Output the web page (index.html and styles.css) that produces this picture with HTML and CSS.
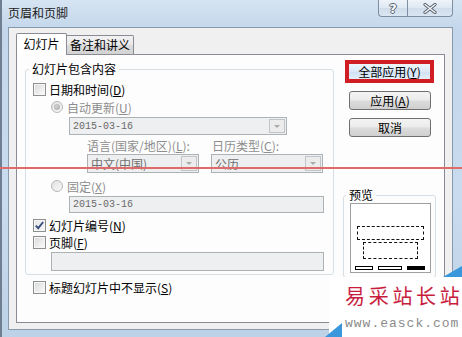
FILE: index.html
```html
<!DOCTYPE html>
<html lang="zh-CN">
  <head>
    <meta charset="UTF-8" />
    <title>页眉和页脚</title>
    <link rel="stylesheet" href="styles.css">
  </head>
  <body>
    <div class="window">
      <div class="titlebar">
        <span class="title">页眉和页脚</span>
        <div class="caption">
          <span class="cap help">?</span>
          <span class="cap close">
            <svg width="14" height="11" viewBox="0 0 14 11"><path d="M2 1.5 L12 9.5 M12 1.5 L2 9.5" stroke="#56606c" stroke-width="3.2" stroke-linecap="round"/><path d="M2 1.5 L12 9.5 M12 1.5 L2 9.5" stroke="#f6f8fa" stroke-width="1.4" stroke-linecap="round"/></svg>
          </span>
        </div>
      </div>

      <div class="client">
        <div class="tabs">
          <div class="tab active">幻灯片</div>
          <div class="tab">备注和讲义</div>
        </div>

        <div class="panel">
          <div class="main">
            <fieldset class="group content">
              <legend>幻灯片包含内容</legend>
              <label class="row mt6"><span class="cb"></span>日期和时间(<u>D</u>)</label>
              <label class="row mt4 in1 off"><span class="rb on"></span>自动更新(<u>U</u>)</label>
              <div class="row box-row mt3 in2">
                <div class="combo w218"><span class="val">2015-03-16</span><span class="drop"></span></div>
              </div>
              <div class="row mt3 in3 off labels">
                <span class="lbl-lang">语言(国家/地区)(<u>L</u>):</span>
                <span>日历类型(<u>C</u>):</span>
              </div>
              <div class="row box-row mt2 in3 pair">
                <div class="combo w112 tall"><span class="val cjk">中文(中国)</span><span class="drop"></span></div>
                <div class="combo w112 tall"><span class="val cjk">公历</span><span class="drop"></span></div>
              </div>
              <label class="row mt6 in1 off"><span class="rb"></span>固定(<u>X</u>)</label>
              <div class="row box-row mt3 in2">
                <div class="field w255"><span class="val">2015-03-16</span></div>
              </div>
              <label class="row mt5"><span class="cb checked"><svg width="11" height="11" viewBox="0 0 11 11"><path d="M1.8 5.6 L4.2 8.2 L9.2 2" fill="none" stroke="#3b4f7e" stroke-width="1.9"/></svg></span>幻灯片编号(<u>N</u>)</label>
              <label class="row mt3"><span class="cb"></span>页脚(<u>F</u>)</label>
              <div class="row box-row mt3 in1">
                <div class="field w273 tall"></div>
              </div>
            </fieldset>
            <label class="row mt5 solo"><span class="cb"></span>标题幻灯片中不显示(<u>S</u>)</label>
          </div>

          <div class="side">
            <div class="hl"><button class="btn def">全部应用(<u>Y</u>)</button></div>
            <button class="btn">应用(<u>A</u>)</button>
            <button class="btn">取消</button>

            <fieldset class="group preview">
              <legend>预览</legend>
              <div class="slide">
                <div class="dash d1"></div>
                <div class="dash d2"></div>
                <div class="bars">
                  <span class="bar b1"></span>
                  <span class="bar b2"></span>
                  <span class="bar b3"></span>
                </div>
              </div>
            </fieldset>
          </div>
        </div>
      </div>

      <div class="redline"></div>

      <div class="watermark">
        <svg class="wm-corners" width="137" height="71" viewBox="0 0 137 71">
          <polygon points="118,11 137,11 137,0" fill="#3a97db"/>
          <polygon points="0,71 17,57 17,71" fill="#3a97db"/>
        </svg>
        <div class="wm-name">易采站长站</div>
        <div class="wm-url">www.easck.com</div>
      </div>
    </div>
  </body>
</html>
```

FILE: styles.css
```css
* {
  box-sizing: border-box;
}

body {
  margin: 0;
  width: 462px;
  height: 337px;
  overflow: hidden;
  font-family: "Noto Sans CJK SC", sans-serif;
  font-size: 12px;
  color: #000;
  background: #c4d7eb;
}

u {
  text-decoration: underline;
}

/* window frame */
.window {
  position: relative;
  width: 462px;
  height: 337px;
  display: flex;
  flex-direction: column;
  border-left: 2px solid #6f7f91;
  background: linear-gradient(180deg, #d6e4f2 0, #c3d6eb 30px, #c9dbee 200px, #bdd1e7 100%);
}

.titlebar {
  height: 27px;
  display: flex;
  align-items: flex-start;
  padding-left: 6px;
  flex-shrink: 0;
}

.title {
  line-height: 26px;
  color: #1b1b1b;
}

.caption {
  margin-left: auto;
  margin-right: 9px;
  display: flex;
}

.cap {
  height: 17px;
  display: flex;
  align-items: center;
  justify-content: center;
  border: 1px solid #7e8fa3;
  border-top: none;
  background: linear-gradient(180deg, #eef3f9 0, #dee8f3 50%, #cfdcea 51%, #dae6f2 100%);
}

.cap.help {
  width: 29px;
  border-right: none;
  border-radius: 0 0 0 4px;
  font-family: "DejaVu Sans", sans-serif;
  font-weight: bold;
  font-size: 13px;
  color: #f4f6f8;
  text-shadow: 1px 0 #5a6470, -1px 0 #5a6470, 0 1px #5a6470, 0 -1px #5a6470;
}

.cap.close {
  width: 46px;
  border-radius: 0 0 4px 0;
}

/* client area */
.client {
  flex: 1;
  margin: 0 9px 7px 6px;
  padding: 5px 7px 6px 7px;
  display: flex;
  flex-direction: column;
  background: #f0f0f0;
  border: 1px solid #8b9aab;
}

.tabs {
  display: flex;
  align-items: flex-end;
  height: 22px;
  margin-bottom: -1px;
  position: relative;
  z-index: 1;
}

.tab {
  width: 67px;
  height: 19px;
  margin-bottom: 1px;
  line-height: 18px;
  text-align: center;
  border: 1px solid #898c95;
  border-bottom: none;
  border-left: none;
  border-radius: 0 2px 0 0;
  background: linear-gradient(180deg, #f2f2f2 0, #e9e9e9 50%, #dcdcdc 51%, #d2d2d2 100%);
}

.tab.active {
  width: 51px;
  height: 22px;
  margin-bottom: 0;
  line-height: 20px;
  border-left: 1px solid #898c95;
  border-radius: 2px 2px 0 0;
  background: #fff;
}

.panel {
  flex: 1;
  display: flex;
  border: 1px solid #898c95;
  background: #fdfdfd;
}

.main {
  width: 317px;
  padding-left: 8px;
}

.side {
  width: 94px;
  margin-left: 9px;
  padding-top: 5px;
}

/* group boxes */
.group {
  margin: 0;
  min-width: 0;
  border: 1px solid #d5dfe5;
  border-radius: 3px;
}

.group legend {
  padding: 0 3px;
  margin-left: -4px;
  line-height: 14px;
}

.content {
  width: 309px;
  margin-top: 7px;
  padding: 0 0 3px 7px;
}

.row {
  display: flex;
  align-items: center;
  height: 14px;
  white-space: nowrap;
}

.row.box-row {
  height: auto;
}

.row.solo {
  margin-left: 8px;
}

.mt2 { margin-top: 2px; }
.mt3 { margin-top: 3px; }
.mt4 { margin-top: 4px; }
.mt5 { margin-top: 5px; }
.mt6 { margin-top: 6px; }

.in1 { padding-left: 18px; }
.in2 { padding-left: 36px; }
.in3 { padding-left: 54px; }

.off {
  color: #8d8d8d;
}

.lbl-lang {
  width: 125px;
}

.pair {
  gap: 12px;
}

/* check boxes and radios */
.cb {
  width: 13px;
  height: 13px;
  margin-right: 3px;
  flex-shrink: 0;
  display: flex;
  align-items: center;
  justify-content: center;
  border: 1px solid #8e8f8f;
  background: linear-gradient(135deg, #d6d8db 0, #eeeeee 60%, #fbfbfb 100%);
  box-shadow: inset 0 0 0 1px #f6f6f6;
}

.cb.checked {
  background: linear-gradient(135deg, #e4e6ea 0, #f8f8f8 100%);
}

.rb {
  width: 12px;
  height: 12px;
  margin-right: 4px;
  flex-shrink: 0;
  display: flex;
  align-items: center;
  justify-content: center;
  border: 1px solid #b8b8b8;
  border-radius: 50%;
  background: linear-gradient(135deg, #e2e2e2, #f8f8f8);
}

.rb.on::after {
  content: "";
  width: 6px;
  height: 6px;
  border-radius: 50%;
  background: radial-gradient(circle at 40% 40%, #d4d4d4, #a2a2a2);
}

/* combos and fields */
.combo,
.field {
  height: 18px;
  display: flex;
  align-items: center;
  border: 1px solid #adb2b5;
  background: #eeeff1;
}

.tall {
  height: 19px;
}

.w112 { width: 112px; }
.w218 { width: 218px; }
.w255 { width: 255px; height: 17px; }
.w273 { width: 273px; }

.val {
  flex: 1;
  padding-left: 3px;
  font-family: "Liberation Mono", monospace;
  font-size: 10px;
  color: #6a6a6a;
}

.val.cjk {
  font-family: "Noto Sans CJK SC", sans-serif;
  font-size: 12px;
  color: #707070;
}

.drop {
  width: 16px;
  align-self: stretch;
  margin: 1px 1px 1px 0;
  display: flex;
  align-items: center;
  justify-content: center;
  border: 1px solid #c1c5c9;
  background: #ececec;
}

.drop::after {
  content: "";
  border-left: 3px solid transparent;
  border-right: 3px solid transparent;
  border-top: 3px solid #a9a9a9;
}

/* buttons */
.btn {
  display: block;
  width: 82px;
  height: 19px;
  margin: 8px 0 0 6px;
  padding: 0;
  font: inherit;
  color: #000;
  line-height: 16px;
  text-align: center;
  border: 1px solid #707070;
  border-radius: 3px;
  background: linear-gradient(180deg, #f4f4f4 0, #ebebeb 48%, #dcdcdc 52%, #cfcfcf 100%);
}

.hl {
  width: 89px;
  height: 23px;
  margin-left: 2px;
  border: 4px solid #d01e24;
}

.btn.def {
  width: 81px;
  height: 15px;
  margin: 0;
  border: none;
  border-radius: 0;
  line-height: 14px;
  background: linear-gradient(180deg, #eef5fc 0, #dce9f7 50%, #cfe1f4 51%, #e3eefa 100%);
}

/* preview */
.preview {
  width: 93px;
  height: 90px;
  margin-top: 51px;
  padding: 1px 0 0 6px;
}

.slide {
  width: 81px;
  height: 70px;
  padding: 22px 0 0 0;
  border: 1px solid #a0a0a0;
  background: #fff;
}

.dash {
  border: 1px dashed #111;
}

.d1 {
  width: 67px;
  height: 14px;
  margin-left: 6px;
}

.d2 {
  width: 55px;
  height: 17px;
  margin: 2px 0 0 12px;
}

.bars {
  display: flex;
  gap: 5px;
  margin: 7px 0 0 4px;
}

.bar {
  height: 4px;
  border: 1px solid #000;
  background: #fff;
}

.b1 { width: 18px; }
.b2 { width: 24px; }
.b3 { width: 18px; background: #000; }

/* overlays */
.redline {
  position: absolute;
  left: -2px;
  top: 167px;
  width: 462px;
  height: 2px;
  background: #e06a6a;
}

.watermark {
  position: absolute;
  left: 323px;
  top: 266px;
  width: 137px;
  height: 71px;
}

.watermark::before {
  content: "";
  position: absolute;
  left: 4px;
  top: 11px;
  right: 0;
  bottom: 0;
  background: #fff;
}

.wm-corners {
  position: absolute;
  left: 0;
  top: 0;
}

.wm-name {
  position: absolute;
  left: 20px;
  top: 17px;
  font-size: 20px;
  line-height: 26px;
  letter-spacing: 3.7px;
  color: #c81d3e;
  white-space: nowrap;
}

.wm-url {
  position: absolute;
  left: 20px;
  top: 50px;
  font-family: "Liberation Mono", monospace;
  font-size: 13px;
  line-height: 16px;
  letter-spacing: 1px;
  color: #8b8b8b;
  white-space: nowrap;
}
```
